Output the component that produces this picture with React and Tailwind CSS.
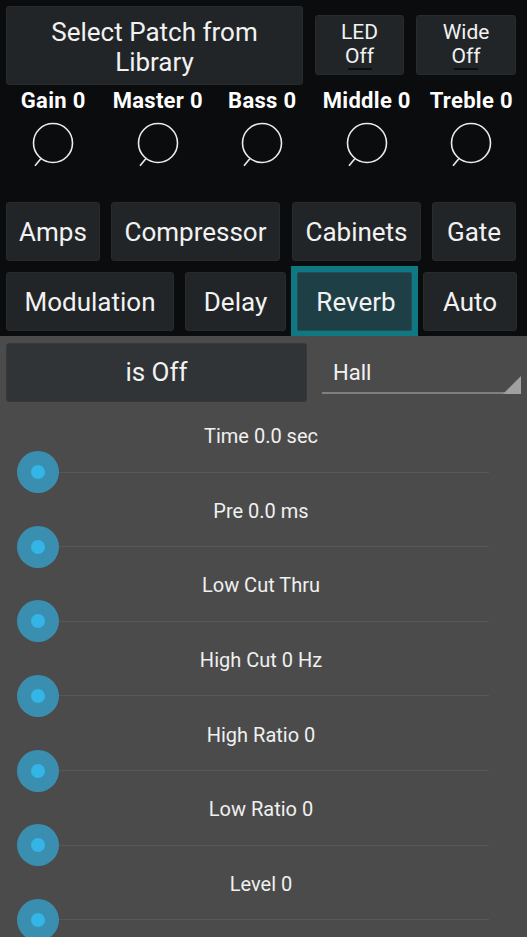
import React from "react";

function Knob({ label }) {
  return (
    <div className="w-[104.5px] flex flex-col items-center">
      <div className="h-[24px] leading-[24px] text-[22px] tracking-[0.3px] font-bold text-white whitespace-nowrap">{label}</div>
      <svg width="50" height="50" viewBox="0 0 50 50" className="mt-[8px]">
        <circle cx="25" cy="22" r="19.5" fill="none" stroke="#ececec" strokeWidth="1.6" />
        <line x1="12.8" y1="37.8" x2="7" y2="44.8" stroke="#ececec" strokeWidth="1.6" />
      </svg>
    </div>
  );
}

function Tab({ w, ml, children }) {
  return (
    <div
      className={`${w} ${ml} h-[59px] shrink-0 rounded-[3px] bg-[#222528] border border-[#282b2e] flex items-center justify-center pt-[1px] text-[26px] text-[#f2f2f2]`}
    >
      {children}
    </div>
  );
}

function Slider({ label }) {
  return (
    <div className="h-[74.67px] shrink-0">
      <div className="h-[22px] leading-[22px] text-[20px] text-[#f0f0f0] text-center pr-[5px]">{label}</div>
      <div className="relative mt-[4px] ml-[17px] w-[472px] h-[42px] flex items-center">
        <div className="ml-[21px] flex-1 h-px bg-[#585858]" />
        <div className="absolute left-0 top-0 w-[42px] h-[42px] rounded-full bg-[#3a8fb0] flex items-center justify-center">
          <div className="w-[14px] h-[14px] rounded-full bg-[#33b5e5]" />
        </div>
      </div>
    </div>
  );
}

export default function App() {
  const knobs = ["Gain 0", "Master 0", "Bass 0", "Middle 0", "Treble 0"];
  const sliders = [
    "Time 0.0 sec",
    "Pre 0.0 ms",
    "Low Cut Thru",
    "High Cut 0 Hz",
    "High Ratio 0",
    "Low Ratio 0",
    "Level 0",
  ];
  return (
    <div className="w-[527px] h-[937px] overflow-hidden bg-[#0b0c0d] font-['Roboto',sans-serif] flex flex-col">
      {/* Top buttons */}
      <div className="flex items-start pt-[6px] h-[85px] shrink-0">
        <div className="ml-[6px] w-[297px] h-[79px] rounded-[3px] bg-[#222528] border border-[#282b2e] flex items-center justify-center pt-[2px] text-center text-[26px] leading-[30px] text-[#f2f2f2]">
          Select Patch from
          <br />
          Library
        </div>
        <div className="ml-[12px] mt-[9px] w-[89px] h-[60px] rounded-[3px] bg-[#222528] border border-[#282b2e] flex flex-col items-center pt-[5px] text-[21px] leading-[23.5px] text-[#f2f2f2]">
          <div>LED</div>
          <div>Off</div>
          <div className="-mt-[0.5px] w-[24px] h-[2px] bg-[#0d0e0f]" />
        </div>
        <div className="ml-[12px] mt-[9px] w-[100px] h-[60px] rounded-[3px] bg-[#222528] border border-[#282b2e] flex flex-col items-center pt-[5px] text-[21px] leading-[23.5px] text-[#f2f2f2]">
          <div>Wide</div>
          <div>Off</div>
          <div className="-mt-[0.5px] w-[24px] h-[2px] bg-[#0d0e0f]" />
        </div>
      </div>

      {/* Knobs */}
      <div className="flex pl-[1px] mt-[4px] shrink-0">
        {knobs.map((k) => (
          <Knob key={k} label={k} />
        ))}
      </div>

      {/* Tabs row 1 */}
      <div className="flex mt-[31px] shrink-0">
        <Tab w="w-[94px]" ml="ml-[6px]">Amps</Tab>
        <Tab w="w-[169px]" ml="ml-[11px]">Compressor</Tab>
        <Tab w="w-[129px]" ml="ml-[12px]">Cabinets</Tab>
        <Tab w="w-[84px]" ml="ml-[11px]">Gate</Tab>
      </div>

      {/* Tabs row 2 */}
      <div className="flex items-start mt-[5px] h-[70px] shrink-0">
        <div className="mt-[6px] flex">
          <Tab w="w-[168px]" ml="ml-[6px]">Modulation</Tab>
          <Tab w="w-[101px]" ml="ml-[11px]">Delay</Tab>
        </div>
        <div className="ml-[5px] w-[127px] h-[70px] shrink-0 border-[6px] border-b-[5px] border-[#0e7883] bg-[#0e7883]">
          <div className="w-full h-full rounded-[2px] bg-[#1f3f46] border border-[#2a4b52] flex items-center justify-center pt-[2px] pl-[3px] text-[26px] text-[#f2f2f2]">
            Reverb
          </div>
        </div>
        <div className="mt-[6px] flex">
          <Tab w="w-[94px]" ml="ml-[5px]">Auto</Tab>
        </div>
      </div>

      {/* Panel */}
      <div className="flex-1 bg-[#4b4b4b] pt-[7px] flex flex-col">
        <div className="flex items-start shrink-0">
          <div className="ml-[6px] w-[301px] h-[59px] rounded-[3px] bg-[#303437] border border-[#36393c] flex items-center justify-center text-[26px] text-[#f2f2f2]">
            is Off
          </div>
          <div className="ml-[15px] w-[199px] h-[51px] flex flex-col">
            <div className="flex-1 flex items-center pl-[11px] pt-[9px] text-[22px] text-[#f2f2f2]">Hall</div>
            <div className="relative h-[2px] bg-[#7f7f7f]">
              <svg width="18" height="18" viewBox="0 0 18 18" className="absolute right-0 bottom-0">
                <polygon points="18,0 18,18 0,18" fill="#a0a0a0" />
              </svg>
            </div>
          </div>
        </div>
        <div className="mt-[23px] flex flex-col">
          {sliders.map((s) => (
            <Slider key={s} label={s} />
          ))}
        </div>
      </div>
    </div>
  );
}
